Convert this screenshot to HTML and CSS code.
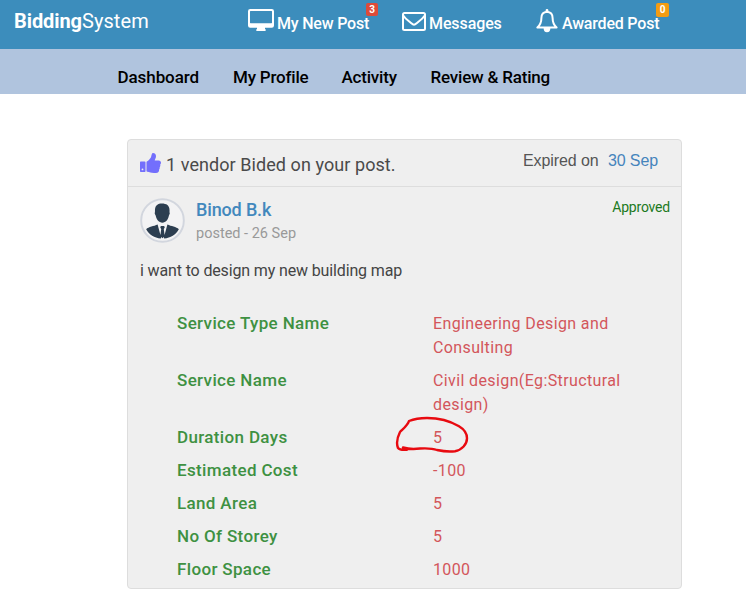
FILE: index.html
```html
<!DOCTYPE html>
<html lang="en">
<head>
<meta charset="utf-8">
<title>BiddingSystem</title>
<link rel="stylesheet" href="styles.css">
</head>
<body>
<header class="topbar">
  <a class="brand"><b>Bidding</b>System</a>
  <a class="top-link link-post">
    <svg class="icon-desktop" viewBox="0 0 26 22"><path fill="#fff" fill-rule="evenodd" d="M2.200 0h21.600a2.200 2.200 0 0 1 2.200 2.200v14.300a2.200 2.200 0 0 1-2.200 2.200H17v1.300c.6.300.9.700.9 1.100 0 .5-.4.900-.9.900H9c-.5 0-.9-.4-.9-.9 0-.4.300-.8.900-1.100v-1.300H2.200A2.200 2.200 0 0 1 0 16.500V2.200A2.200 2.200 0 0 1 2.200 0zM2.500 1.900a.5.500 0 0 0-.5.500v11.300c0 .3.200.5.500.5h21c.3 0 .5-.2.500-.5V2.400a.5.500 0 0 0-.5-.5z"/></svg>
    <span>My New Post</span>
    <i class="badge badge-red">3</i>
  </a>
  <a class="top-link link-msg">
    <svg class="icon-mail" viewBox="0 0 24 19"><g fill="none" stroke="#fff" stroke-width="2" stroke-linejoin="round"><rect x="1" y="1" width="22" height="17" rx="1.500"/><path d="M1.200 3.500C3.500 7 6.500 8.800 9 11c1.300 1.100 2 1.700 3 1.700s1.700-.6 3-1.700c2.500-2.200 5.500-4 7.800-7.500"/></g></svg>
    <span>Messages</span>
  </a>
  <a class="top-link link-award">
    <svg class="icon-bell" viewBox="0 0 22 24"><path fill="none" stroke="#fff" stroke-width="2" stroke-linejoin="round" d="M11 2.700C7.200 3 5.400 5.600 5.400 9c0 4.800-1.400 7.200-4 9.500h19.200c-2.600-2.300-4-4.700-4-9.500 0-3.400-1.800-6-5.600-6.300z"/><path fill="#fff" d="M9.600 2.600V1.400a1.400 1.400 0 0 1 2.800 0v1.200zM7.600 19h6.800a3.400 4.200 0 0 1-6.800 0z"/></svg>
    <span>Awarded Post</span>
    <i class="badge badge-orange">0</i>
  </a>
</header>
<nav class="subnav">
  <a class="n1">Dashboard</a><a class="n2">My Profile</a><a class="n3">Activity</a><a class="n4">Review &amp; Rating</a>
</nav>
<main class="card">
  <div class="card-head">
    <svg class="icon-thumb" viewBox="0 0 21 20"><path fill="#736ffc" fill-rule="evenodd" d="M.7 8.500h4.100c.4 0 .7.300.7.700v9c0 .4-.3.700-.7.700H.7a.7.700 0 0 1-.7-.7v-9c0-.4.300-.7.700-.7zM2.500 15.500a.9.900 0 1 0 0 1.800.9.900 0 0 0 0-1.800zM6.500 9.200c0-.5.300-.8.800-.9 1-.3 2.200-2 3.200-3.200.9-1 .7-2.500 1.300-3.900C12 .5 12.400 0 13 0c2 0 3 1.300 3 3.200 0 1.700-1 2.800-1.300 4.300h4.100c1.200 0 2.200 1 2.200 2.200 0 .7-.3 1.300-.8 1.800.3 1 .1 2-.5 2.700.2.900 0 1.800-.6 2.400.1 2.300-.8 3.400-3.200 3.400h-2c-2.700 0-4.400-1.200-6.700-1.300-.4 0-.7-.3-.7-.7z"/></svg>
    <span class="bid-text">1 vendor Bided on your post.</span>
    <span class="expiry">Expired on <a>30 Sep</a></span>
  </div>
  <div class="card-body">
    <div class="author">
      <svg class="avatar" viewBox="0 0 46 46"><circle cx="23" cy="23" r="21.800" fill="#f3f3f4" stroke="#d2d6de" stroke-width="2"/><path fill="#2c3e50" d="M15.300 12c.3-4.500 3.200-6.300 7-6.300 4.800 0 7.900 2 7.900 6.800 0 1.500-.1 2.200.3 3.200-.2 1-.7 1.500-1 2.500-.8 4-3.200 7-6.600 7s-6-3-6.800-7c-.4-1-.9-1.500-1.100-2.500.4-1.300.3-2 .3-3.700z"/><path fill="#2c3e50" d="M18 27.200l3.500 12.800-.2 1.400C14.700 41 9.400 37.500 6.300 32c2.500-2.500 7.900-3 11.700-4.800zM28 27.200c3.800 1.800 9.200 2.300 11.700 4.800-3.100 5.500-8.400 9-15 9.400L24.500 40zM21.300 28.500h3.400l.6 1.700-1 1.500 1 7.300-2.300 2.200-2.300-2.200 1-7.300-1-1.500z"/></svg>
      <div class="who"><a class="name">Binod B.k</a><span class="date">posted - 26 Sep</span></div>
      <span class="status">Approved</span>
    </div>
    <p class="desc">i want to design my new building map</p>
    <dl class="details">
      <dt>Service Type Name</dt><dd>Engineering Design and Consulting</dd>
      <dt>Service Name</dt><dd>Civil design(Eg:Structural design)</dd>
      <dt>Duration Days</dt><dd class="marked">5<svg class="scribble" viewBox="0 0 76 38"><path fill="none" stroke="#e80a10" stroke-width="2.400" stroke-linecap="round" stroke-linejoin="round" d="M8 31.500c5 1.500 10 2 17 1 7-.4 12-.4 17 1.500 7 1.500 12 2 18 1.200 7-1.200 12-7 12-13 0-5-3-9-8-12C55 5 44 2 32 2c-7 0-13 1-18 3-1 4-6 8-9 11-3 6-4 11-2 16 2 2.500 5 2 9 1.800"/></svg></dd>
      <dt>Estimated Cost</dt><dd>-100</dd>
      <dt>Land Area</dt><dd>5</dd>
      <dt>No Of Storey</dt><dd>5</dd>
      <dt>Floor Space</dt><dd>1000</dd>
    </dl>
  </div>
</main>
</body>
</html>
```
FILE: styles.css
```css
* { box-sizing: border-box; }
body { margin: 0; background: #fff; color: #4a4a4a; font-family: Roboto, "Liberation Sans", sans-serif; }
svg { display: block; flex: none; }
.topbar { height: 49px; background: #3c8dbc; color: #fff; display: grid; grid-template-columns: 234px 154px 134px 1fr; padding-left: 14px; white-space: nowrap; }
.brand { font-size: 20px; line-height: 42px; letter-spacing: .08px; }
.brand b { font-weight: 700; letter-spacing: -.08px; }
.top-link { position: relative; display: flex; align-items: flex-start; font-size: 16px; font-weight: 500; line-height: 20px; letter-spacing: -.2px; }
.top-link span { margin-top: 14px; }
.link-msg { letter-spacing: -.1px; }
.icon-desktop { width: 26px; height: 22px; margin: 9px 3px 0 0; }
.icon-mail { width: 24px; height: 19px; margin: 12px 3px 0 0; }
.icon-bell { width: 22px; height: 24px; margin: 9px 4px 0 0; }
.badge { position: absolute; top: 3px; height: 13px; border-radius: 2px; font: 700 10px/13px Roboto, sans-serif; letter-spacing: 0; text-align: center; }
.badge-red { left: 118px; width: 12px; background: #dd4b39; }
.badge-orange { left: 120px; width: 13px; height: 14px; background: #f39c12; }
.subnav { height: 45px; background: #b0c4de; color: #000; padding: 18px 0 0 117.5px; display: flex; font-size: 17px; line-height: 20px; font-weight: 500; letter-spacing: -.2px; white-space: nowrap; }
.n1 { width: 115.5px; letter-spacing: -.08px; }
.n2 { width: 108.5px; }
.n3 { width: 89px; }
.card { margin: 45px 0 0 127px; width: 555px; height: 450px; background: #efefef; border: 1px solid #ddd; border-radius: 4px; }
.card-head { height: 47px; border-bottom: 1px solid #ddd; display: flex; padding: 0 23px 0 12px; white-space: nowrap; }
.icon-thumb { width: 21px; height: 20px; margin: 13px 5px 0 0; }
.bid-text { font-size: 18px; line-height: 24px; margin-top: 13px; letter-spacing: .07px; }
.expiry { margin: 10px 0 0 auto; font: 16px/21px "Liberation Sans", sans-serif; letter-spacing: -.1px; color: #555; }
.expiry a { color: #4584bc; margin-left: 5px; }
.card-body { padding: 11px 11px 0 12px; }
.author { display: flex; height: 61px; }
.avatar { width: 45px; height: 45px; }
.who { display: flex; flex-direction: column; margin-left: 11px; }
.name { font-size: 18px; font-weight: 500; line-height: 24px; color: #4288bd; letter-spacing: -.15px; }
.date { font-size: 14.5px; line-height: 22px; padding-top: 1px; color: #999; }
.status { margin: -1px 0 0 auto; font-size: 14px; line-height: 20px; letter-spacing: -.2px; color: #1c7a22; }
.desc { margin: 0; font-size: 16px; line-height: 24px; letter-spacing: -.14px; color: #444; }
.details { margin: 24px 0 0 37px; display: grid; grid-template-columns: 256px 206px; row-gap: 9px; font-size: 16px; line-height: 24px; letter-spacing: .38px; padding-top: 5px; }
.details dt { font-size: 17px; font-weight: 500; letter-spacing: .35px; color: #3e9142; margin-top: -1px; }
.details dd { margin: 0; color: #d3565b; }
.marked { position: relative; }
.scribble { position: absolute; left: -38px; top: -10.5px; width: 76px; height: 38px; }
```
